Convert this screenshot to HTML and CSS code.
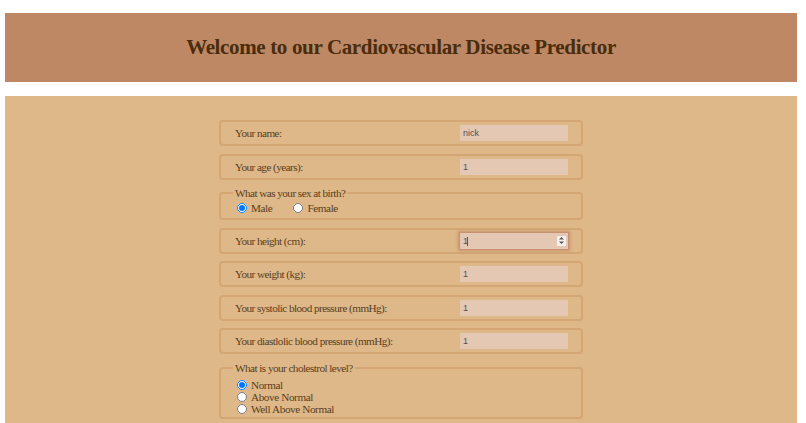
FILE: index.html
```html
<!DOCTYPE html>
<html>
<head>
<meta charset="utf-8">
<link rel="stylesheet" href="styles.css">
</head>
<body>
<div class="page">
  <header class="banner">
    <h1>Welcome to our Cardiovascular Disease Predictor</h1>
  </header>
  <main class="panel">
    <form class="form">
      <div class="row">
        <label>Your name:</label>
        <input class="field" type="text" value="nick">
      </div>
      <div class="row">
        <label>Your age (years):</label>
        <input class="field" type="text" value="1">
      </div>
      <fieldset class="group sex">
        <legend>What was your sex at birth?</legend>
        <div class="inline">
          <label class="opt"><input type="radio" name="sex" checked> Male</label>
          <label class="opt"><input type="radio" name="sex"> Female</label>
        </div>
      </fieldset>
      <div class="row">
        <label>Your height (cm):</label>
        <span class="focuswrap">
          <input class="field focused" type="text" value="1">
          <span class="caret"></span>
          <span class="spin"><svg width="7" height="9" viewBox="0 0 7 9"><path d="M3.5 1 L6 3.6 H1 Z M3.5 8 L6 5.4 H1 Z" fill="#555"/></svg></span>
        </span>
      </div>
      <div class="row">
        <label>Your weight (kg):</label>
        <input class="field" type="text" value="1">
      </div>
      <div class="row">
        <label>Your systolic blood pressure (mmHg):</label>
        <input class="field" type="text" value="1">
      </div>
      <div class="row">
        <label>Your diastlolic blood pressure (mmHg):</label>
        <input class="field" type="text" value="1">
      </div>
      <fieldset class="group chol">
        <legend>What is your cholestrol level?</legend>
        <label class="opt block"><input type="radio" name="chol" checked> Normal</label>
        <label class="opt block"><input type="radio" name="chol"> Above Normal</label>
        <label class="opt block"><input type="radio" name="chol"> Well Above Normal</label>
      </fieldset>
    </form>
  </main>
</div>
</body>
</html>
```

FILE: styles.css
```css
html, body {
  margin: 0;
  padding: 0;
  background: #ffffff;
  overflow: hidden;
}
.page {
  padding: 13px 9px 0 5px;
  font-family: "Liberation Serif", "Times New Roman", serif;
}
.banner {
  background: #be8864;
  height: 69px;
  display: flex;
  align-items: center;
  justify-content: center;
}
.banner h1 {
  margin: 0;
  font-size: 21px;
  font-weight: bold;
  color: #4a2c0e;
  letter-spacing: -0.35px;
}
.panel {
  margin-top: 14px;
  background: #deb888;
  padding: 24px 0 40px;
  min-height: 400px;
}
.form {
  width: 364px;
  margin: 0 auto;
  display: flex;
  flex-direction: column;
  gap: 7.5px;
  color: #5a3d20;
  font-size: 11.2px;
  letter-spacing: -0.55px;
}
.row {
  box-sizing: border-box;
  height: 26px;
  border: 2px solid #d3a674;
  border-radius: 4px;
  display: flex;
  align-items: center;
  padding: 0 13px 0 14px;
}
.row > label {
  flex: 1;
}
.field {
  box-sizing: border-box;
  width: 108px;
  height: 16px;
  border: none;
  outline: none;
  background: #e4c8b3;
  padding: 0 3px;
  font-family: "Liberation Sans", Arial, sans-serif;
  font-size: 9px;
  letter-spacing: 0;
  color: #555050;
}
.focuswrap {
  position: relative;
  display: block;
  width: 108px;
  height: 16px;
}
.focused {
  box-shadow: 0 0 0 1px #c89270, 0 0 3px 2px #c8916c;
}
.caret {
  position: absolute;
  left: 7px;
  top: 4px;
  width: 1px;
  height: 9px;
  background: #555;
}
.spin {
  position: absolute;
  right: 2px;
  top: 3px;
  width: 9px;
  height: 10px;
  background: #f4f0ec;
  display: flex;
  align-items: center;
  justify-content: center;
  border-radius: 1px;
}
.group {
  margin: 0;
  border: 2px solid #d3a674;
  border-radius: 4px;
  padding: 0 12px 3px 12px;
}
.group legend {
  padding: 0 2px;
  color: #5a3d20;
}
.sex {
  padding-top: 3px;
  padding-bottom: 4px;
}
.inline {
  display: flex;
  gap: 17px;
}
.opt {
  display: flex;
  align-items: center;
  gap: 3px;
  letter-spacing: -0.4px;
}
.opt input {
  width: 10px;
  height: 10px;
  margin: 0 1px 0 4px;
}
.chol {
  padding-top: 5px;
  padding-bottom: 2px;
}
.block {
  height: 12px;
}
```
